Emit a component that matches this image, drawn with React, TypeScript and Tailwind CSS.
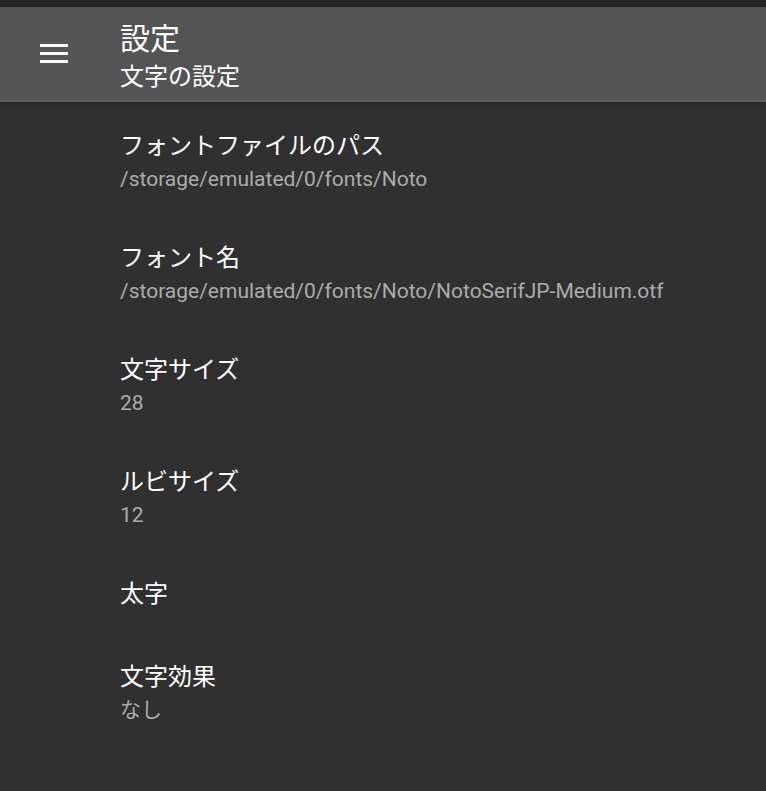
const jp = { fontFamily: 'Roboto, "Noto Sans CJK JP", sans-serif' };

const items: { title: string; sub?: string }[] = [
  { title: 'フォントファイルのパス', sub: '/storage/emulated/0/fonts/Noto' },
  { title: 'フォント名', sub: '/storage/emulated/0/fonts/Noto/NotoSerifJP-Medium.otf' },
  { title: '文字サイズ', sub: '28' },
  { title: 'ルビサイズ', sub: '12' },
  { title: '太字' },
  { title: '文字効果', sub: 'なし' },
];

export default function App() {
  return (
    <div className="w-[766px] h-[791px] bg-[#303030] overflow-hidden flex flex-col" style={jp}>
      <div className="h-[7px] bg-[#262626] shrink-0" />
      <div className="h-[95px] bg-[#545454] border-b-2 border-[#5c5c5c] flex items-center shrink-0 shadow-md">
        <div className="w-[120px] flex items-center justify-center pl-[26px] pr-[38px]">
          <div className="w-[28px] flex flex-col gap-[5px]">
            <span className="h-[3px] bg-white block" />
            <span className="h-[3px] bg-white block" />
            <span className="h-[3px] bg-white block" />
          </div>
        </div>
        <div className="flex flex-col text-white mt-[6px]">
          <span className="text-[30px] leading-[40px]">設定</span>
          <span className="text-[24px] leading-[36px]">文字の設定</span>
        </div>
      </div>
      <div className="flex flex-col">
        {items.map((it) => (
          <div
            key={it.title}
            className={`${it.sub ? 'h-[112px]' : 'h-[83px]'} pl-[120px] pt-[28px] flex flex-col`}
          >
            <span className="text-[24px] leading-[32px] text-white">{it.title}</span>
            {it.sub && <span className="text-[21px] leading-[34px] text-[#ababab]">{it.sub}</span>}
          </div>
        ))}
      </div>
    </div>
  );
}
